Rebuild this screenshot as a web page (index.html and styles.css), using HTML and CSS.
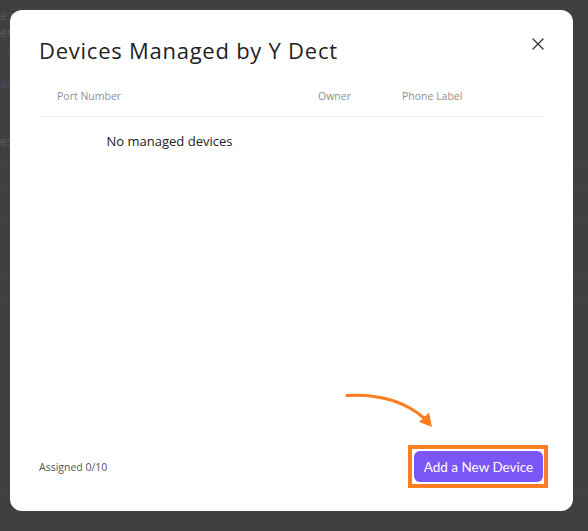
FILE: index.html
```html
<!DOCTYPE html>
<html lang="en">
<head>
<meta charset="utf-8">
<title>Devices Managed by Y Dect</title>
<link rel="stylesheet" href="styles.css">
</head>
<body>
<div class="page">
  <div class="bg-line t1">e p</div>
  <div class="bg-line t2">er</div>
  <div class="bg-line t3">s</div>
  <div class="bg-line t4 link">ab</div>
  <div class="bg-line t5">es</div>
  <div class="bg-row r1"></div>
  <div class="bg-row r2"></div>
  <div class="bg-row r3"></div>
  <div class="bg-row r4"></div>
  <div class="bg-row r5"></div>
  <div class="bg-row r6"></div>
</div>

<div class="modal" role="dialog" aria-labelledby="modal-title">
  <div class="modal-header">
    <h1 id="modal-title" class="modal-title">Devices Managed by Y Dect</h1>
    <button class="close-btn" aria-label="Close">
      <svg width="12" height="12" viewBox="0 0 12 12"><path d="M1 1 L11 11 M11 1 L1 11" stroke="#333" stroke-width="1.3" fill="none" stroke-linecap="round"/></svg>
    </button>
  </div>

  <table class="devices">
    <thead>
      <tr>
        <th class="col-port">Port Number</th>
        <th class="col-owner">Owner</th>
        <th class="col-label">Phone Label</th>
      </tr>
    </thead>
    <tbody>
      <tr>
        <td class="empty">No managed devices</td>
        <td></td>
        <td></td>
      </tr>
    </tbody>
  </table>

  <div class="modal-footer">
    <span class="assigned">Assigned 0/10</span>
    <span class="highlight">
      <button class="add-btn">Add a New Device</button>
    </span>
  </div>

  <svg class="arrow" width="100" height="50" viewBox="0 0 100 50">
    <path d="M7 10.5 C 35 9, 62 14, 84 33" stroke="#ff7d22" stroke-width="3.2" fill="none" stroke-linecap="round"/>
    <polygon points="79,37 89,27.5 92,42" fill="#ff7d22"/>
  </svg>
</div>
</body>
</html>
```

FILE: styles.css
```css
html, body {
  margin: 0;
  padding: 0;
}

body {
  width: 588px;
  height: 531px;
  overflow: hidden;
  background: #404040;
  font-family: "Open Sans", "Noto Sans", sans-serif;
}

.page {
  position: relative;
  width: 588px;
  height: 531px;
}

.bg-line {
  position: absolute;
  left: 0;
  font-size: 12px;
  line-height: 14px;
  color: #5c5c5c;
}

.t1 { top: 9px; }
.t2 { top: 26px; }
.t3 { top: 44px; left: 8px; }
.t4 { top: 77px; }
.t5 { top: 135px; }
.link { color: #4d4870; }

.bg-row {
  position: absolute;
  left: 0;
  right: 0;
  height: 0;
  border-top: 1px solid #474747;
}

.r1 { top: 162px; }
.r2 { top: 189px; }
.r3 { top: 218px; }
.r4 { top: 274px; }
.r5 { top: 303px; }
.r6 { top: 490px; }

.modal {
  position: fixed;
  left: 10px;
  top: 10px;
  width: 563px;
  height: 501px;
  box-sizing: border-box;
  padding: 25px 29px 23px;
  background: #fff;
  border-radius: 12px;
  display: flex;
  flex-direction: column;
}

.modal-header {
  display: flex;
  justify-content: space-between;
  align-items: flex-start;
}

.modal-title {
  margin: 0;
  font-size: 22px;
  line-height: 30px;
  font-weight: 400;
  color: #1f1f1f;
  letter-spacing: 0.75px;
}

.close-btn {
  margin: 3px 0 0;
  padding: 0;
  border: 0;
  background: none;
  width: 12px;
  height: 12px;
  display: flex;
}

.devices {
  margin-top: 11px;
  width: 100%;
  border-collapse: collapse;
}

.devices th {
  height: 40px;
  padding: 0 0 0 18px;
  text-align: left;
  font-size: 10.5px;
  font-weight: 400;
  color: #909090;
  border-bottom: 1px solid #ebebeb;
  box-sizing: border-box;
}

.col-port { width: 261px; }
.col-owner { width: 84px; }

.devices td {
  height: 50px;
  padding: 0;
  font-size: 13px;
  color: #222;
  box-sizing: border-box;
}

.devices td.empty {
  text-align: center;
}

.modal-footer {
  margin-top: auto;
  display: flex;
  justify-content: space-between;
  align-items: center;
}

.assigned {
  font-size: 10.5px;
  color: #555;
}

.highlight {
  display: flex;
  padding: 2px 1px 2px 2px;
  border: 4px solid #ff7d22;
  background: #fff;
  margin-right: -4px;
}

.add-btn {
  height: 31px;
  width: 129px;
  padding: 0;
  border: 0;
  border-radius: 6px;
  background: #7b55f6;
  color: #fff;
  font-family: Lato, "Open Sans", sans-serif;
  font-size: 13.5px;
  font-weight: 400;
}

.arrow {
  position: absolute;
  left: 330px;
  top: 375px;
}
```
